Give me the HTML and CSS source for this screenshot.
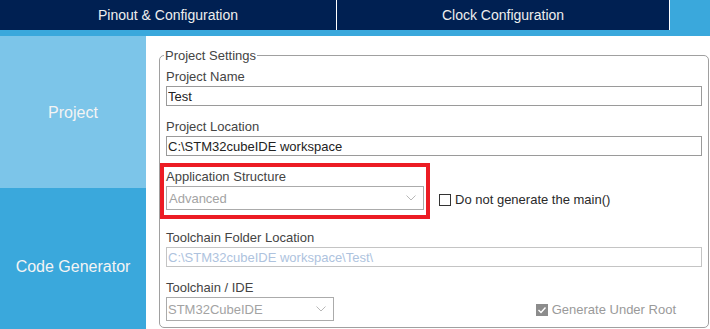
FILE: index.html
```html
<!DOCTYPE html>
<html lang="en">

<head>
    <meta charset="UTF-8">
    <meta name="viewport" content="width=device-width, initial-scale=1.0">
    <title>Project Manager</title>
    <link rel="stylesheet" href="styles.css">
</head>

<body>

    <div class="tabs">
        <div class="tab tab-pinout">Pinout &amp; Configuration</div>
        <div class="tab tab-clock">Clock Configuration</div>
        <div class="tab-rest"></div>
    </div>
    <div class="strip"></div>

    <div class="layout">
        <nav class="side">
            <div class="side-item side-project">Project</div>
            <div class="side-item side-code">Code Generator</div>
        </nav>

        <main class="panel">
            <fieldset class="settings">
                <legend>Project Settings</legend>

                <div class="field">
                    <label for="name">Project Name</label>
                    <input class="text" id="name" type="text" value="Test">
                </div>

                <div class="field">
                    <label for="location">Project Location</label>
                    <input class="text" id="location" type="text" value="C:\STM32cubeIDE workspace">
                </div>

                <div class="field field-app">
                    <div class="app-box">
                        <label>Application Structure</label>
                        <div class="combo combo-app">
                            <span>Advanced</span>
                            <svg class="chevron" width="10" height="6" viewBox="0 0 10 6"><polyline points="0.5,0.5 5,5 9.5,0.5" fill="none" stroke="#b8b8b8" stroke-width="1"/></svg>
                        </div>
                    </div>
                    <label class="check">
                        <span class="box"></span>
                        Do not generate the main()
                    </label>
                </div>

                <div class="field">
                    <label for="folder">Toolchain Folder Location</label>
                    <input class="text text-disabled" id="folder" type="text" value="C:\STM32cubeIDE workspace\Test\" disabled>
                </div>

                <div class="field field-last">
                    <div>
                        <label>Toolchain / IDE</label>
                        <div class="combo combo-ide">
                            <span>STM32CubeIDE</span>
                            <svg class="chevron" width="10" height="6" viewBox="0 0 10 6"><polyline points="0.5,0.5 5,5 9.5,0.5" fill="none" stroke="#b8b8b8" stroke-width="1"/></svg>
                        </div>
                    </div>
                    <label class="check check-off">
                        <svg class="box-on" width="12" height="12" viewBox="0 0 12 12">
                            <rect x="0" y="0" width="12" height="12" fill="#8c8c8c"/>
                            <polyline points="2.5,6 5,8.5 9.5,3.5" fill="none" stroke="#fff" stroke-width="1.4"/>
                        </svg>
                        Generate Under Root
                    </label>
                </div>
            </fieldset>
        </main>
    </div>

</body>

</html>
```

FILE: styles.css
```css
body {
    font-family: "Liberation Sans", Arial, sans-serif;
    margin: 0;
    padding: 0;
    width: 710px;
    height: 329px;
    overflow: hidden;
    background-color: white;
}

.tabs {
    display: flex;
    height: 30px;
}

.tab {
    background-color: #002052;
    color: #eeeeee;
    font-size: 14px;
    line-height: 30px;
    text-align: center;
}

.tab-pinout {
    width: 336px;
    border-right: 1px solid #ffffff;
}

.tab-clock {
    width: 332px;
    border-right: 1px solid #ffffff;
}

.tab-rest {
    flex: 1;
    background-color: #3aa8dc;
}

.strip {
    height: 6px;
    background-color: #3aa8dc;
}

.layout {
    display: flex;
}

.side {
    width: 146px;
    flex-shrink: 0;
}

.side-item {
    display: flex;
    align-items: center;
    justify-content: center;
    color: #f4f4f4;
    font-size: 16px;
}

.side-project {
    height: 150px;
    padding-top: 2px;
    background-color: #7cc5e9;
}

.side-code {
    height: 154px;
    padding-top: 2px;
    background-color: #3aa8dc;
}

.panel {
    flex: 1;
    padding: 12px 1px 0 13px;
}

.settings {
    margin: 0;
    min-width: 0;
    border: 1px solid #a0a0a0;
    border-radius: 5px;
    padding: 6px 6px 6px 6px;
}

.settings legend {
    font-size: 13px;
    line-height: 15px;
    color: #444;
    padding: 0 1px;
    margin-left: -2px;
}

.field {
    margin-bottom: 13px;
}

.field label {
    display: block;
    font-size: 13px;
    line-height: 15px;
    color: #444;
    margin-bottom: 2px;
}

.text {
    display: block;
    box-sizing: border-box;
    width: 100%;
    height: 20px;
    margin: 0;
    padding: 0 1px;
    border: 1px solid #9a9a9a;
    border-radius: 0;
    font-family: "Liberation Sans", Arial, sans-serif;
    font-size: 13px;
    color: #222;
    background-color: white;
    outline: none;
}

.text-disabled {
    border-color: #c4c4c4;
    color: #aec3de;
    -webkit-text-fill-color: #aec3de;
}

.field-app {
    display: flex;
    align-items: flex-end;
    margin-bottom: 17px;
}

.app-box {
    width: 258px;
    padding-bottom: 3px;
    outline: 4px solid #ec1c24;
    outline-offset: 2px;
}

.combo {
    box-sizing: border-box;
    height: 24px;
    display: flex;
    align-items: center;
    justify-content: space-between;
    border: 1px solid #ababab;
    padding: 0 7px 0 2px;
    font-size: 13px;
    color: #a3a3a3;
}

.combo-ide {
    width: 168px;
    padding-left: 1px;
}

.chevron {
    display: block;
}

.field .check {
    display: flex;
    align-items: center;
    margin: 0 0 6px 15px;
    color: #2a2a2a;
}

.box {
    box-sizing: border-box;
    width: 12px;
    height: 12px;
    border: 1px solid #333;
    background-color: white;
    margin-right: 4px;
}

.field-last {
    display: flex;
    align-items: flex-end;
    margin-bottom: 0;
}

.field .check-off {
    margin: 0 26px 4px auto;
    color: #9a9a9a;
}

.box-on {
    display: block;
    margin-right: 4px;
}
```
